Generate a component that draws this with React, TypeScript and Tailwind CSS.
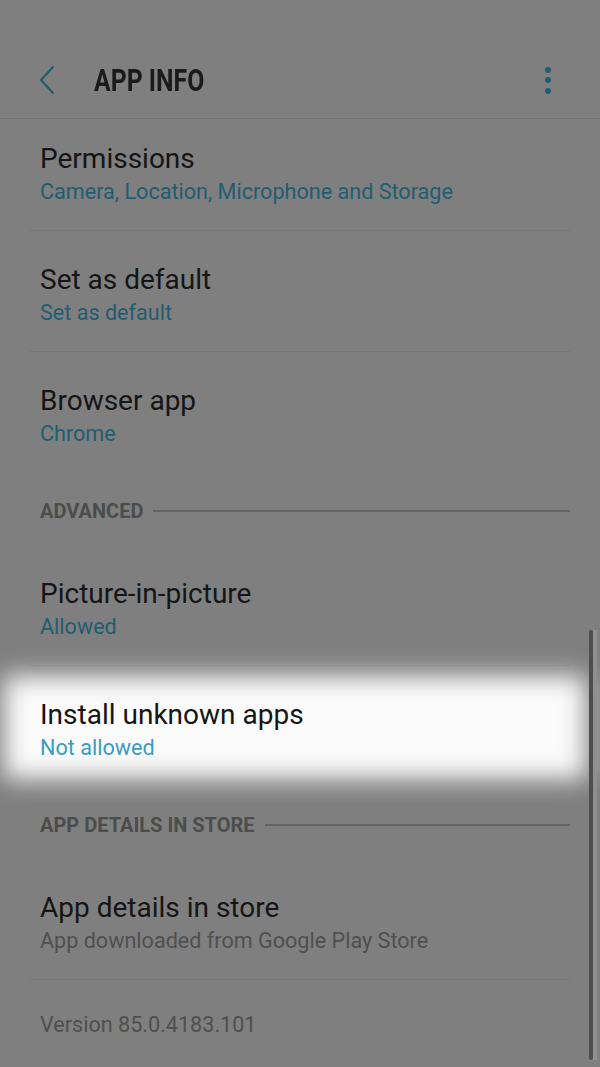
import React from 'react'

type Row = { title: string; sub: string; tone?: 'teal' | 'grey' }

function SettingRow({ title, sub, tone = 'teal', divider = true }: Row & { divider?: boolean }) {
  return (
    <div className="px-[40px] pt-[33px] pb-[22px] relative">
      <div className="text-[28px] leading-[32px] text-[#151515] whitespace-nowrap">{title}</div>
      <div
        className={
          'text-[21.6px] leading-[34px] whitespace-nowrap ' +
          (tone === 'teal' ? 'text-[#1f5d71]' : 'text-[#4f4f4f]')
        }
      >
        {sub}
      </div>
      {divider && <div className="absolute left-[30px] right-[30px] bottom-0 h-px bg-[#767676]" />}
    </div>
  )
}

function SectionHeader({ label }: { label: string }) {
  return (
    <div className="flex items-center gap-[10px] pl-[40px] pr-[30px] pt-[27px] pb-[23px]">
      <span className="text-[20px] leading-[22px] font-bold text-[#4c4c4c] whitespace-nowrap">{label}</span>
      <div className="flex-1 h-[2px] bg-[#646464]" />
    </div>
  )
}

export default function App() {
  return (
    <div
      className="relative w-[600px] h-[1067px] overflow-hidden bg-[#7f7f7f]"
      style={{ fontFamily: 'Roboto, "Noto Sans", sans-serif' }}
    >
      {/* Toolbar */}
      <header className="h-[119px] border-b border-[#737373] flex items-center pt-[42px] pl-[38px] pr-[49px]">
        <svg width="18" height="30" viewBox="0 0 18 30" fill="none" className="shrink-0">
          <path d="M15 2 L3 15 L15 28" stroke="#1f5d71" strokeWidth="2.2" strokeLinecap="round" strokeLinejoin="round" />
        </svg>
        <h1 className="ml-[38px] text-[31px] leading-none font-bold text-[#1a1a1a] scale-x-[0.8] origin-left whitespace-nowrap">
          APP INFO
        </h1>
        <div className="ml-auto flex flex-col gap-[4.5px] items-center">
          <span className="w-[6px] h-[6px] rounded-full bg-[#1f5d71]" />
          <span className="w-[6px] h-[6px] rounded-full bg-[#1f5d71]" />
          <span className="w-[6px] h-[6px] rounded-full bg-[#1f5d71]" />
        </div>
      </header>

      <div className="-mt-[9px]" />

      <SettingRow title="Permissions" sub="Camera, Location, Microphone and Storage" />
      <SettingRow title="Set as default" sub="Set as default" />
      <SettingRow title="Browser app" sub="Chrome" divider={false} />

      <SectionHeader label="ADVANCED" />
      <SettingRow title="Picture-in-picture" sub="Allowed" />

      {/* Highlighted row */}
      <div className="relative px-[40px] pt-[33px] pb-[22px]">
        <div className="absolute left-[4px] right-[14px] top-[10px] bottom-[8px] bg-[#fbfbfb] blur-[12px]" />
        <div className="relative text-[28px] leading-[32px] text-[#151515]">Install unknown apps</div>
        <div className="relative text-[21.6px] leading-[34px] text-[#3a9bbd]">Not allowed</div>
      </div>

      <SectionHeader label="APP DETAILS IN STORE" />
      <SettingRow title="App details in store" sub="App downloaded from Google Play Store" tone="grey" />

      <div className="px-[40px] pt-[34px] text-[21.6px] leading-[22px] text-[#4f4f4f]">Version 85.0.4183.101</div>

      {/* Scrollbar */}
      <div className="absolute left-[589px] top-[630px] w-[4px] h-[430px] rounded-full bg-[#4e4e4e]" />
      <div className="absolute left-[593px] top-[630px] w-[4px] h-[430px] bg-[#8f8f8f]" />
    </div>
  )
}
